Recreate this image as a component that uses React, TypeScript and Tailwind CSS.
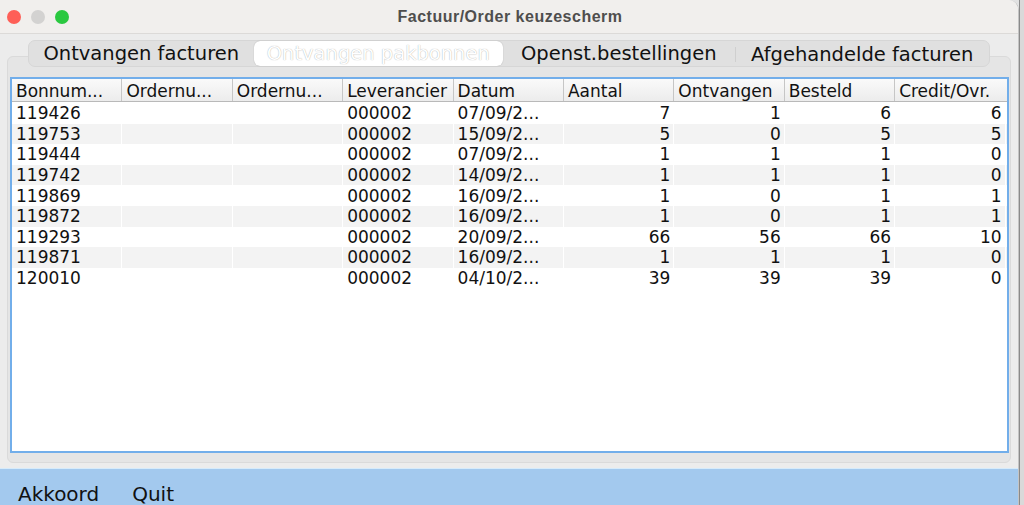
import React from 'react'

const columns = ['Bonnum...', 'Ordernu...', 'Ordernu...', 'Leverancier', 'Datum', 'Aantal', 'Ontvangen', 'Besteld', 'Credit/Ovr.']

const rows = [
  ['119426', '', '', '000002', '07/09/2...', '7', '1', '6', '6'],
  ['119753', '', '', '000002', '15/09/2...', '5', '0', '5', '5'],
  ['119444', '', '', '000002', '07/09/2...', '1', '1', '1', '0'],
  ['119742', '', '', '000002', '14/09/2...', '1', '1', '1', '0'],
  ['119869', '', '', '000002', '16/09/2...', '1', '0', '1', '1'],
  ['119872', '', '', '000002', '16/09/2...', '1', '0', '1', '1'],
  ['119293', '', '', '000002', '20/09/2...', '66', '56', '66', '10'],
  ['119871', '', '', '000002', '16/09/2...', '1', '1', '1', '0'],
  ['120010', '', '', '000002', '04/10/2...', '39', '39', '39', '0'],
]

const tabs = [
  { label: 'Ontvangen facturen', w: 'w-[225px]', selected: false },
  { label: 'Ontvangen pakbonnen', w: 'w-[250px]', selected: true },
  { label: 'Openst.bestellingen', w: 'w-[232px]', selected: false },
  { label: 'Afgehandelde facturen', w: 'w-[255px]', selected: false },
]

export default function App() {
  return (
    <div className="w-[1024px] h-[505px] flex overflow-hidden bg-[#e2e2e2] font-['DejaVu_Sans',sans-serif]">
      <div className="w-[1019px] h-full flex flex-col bg-[#ececec] border-r border-[#c4c4c4] rounded-tr-[10px] overflow-hidden">
        {/* Title bar */}
        <div className="h-[34px] shrink-0 flex items-center px-[7px] bg-[#f1efed] border-b border-[#dcdad8]">
          <div className="flex items-center gap-[10px] shrink-0">
            <span className="block shrink-0 w-[14px] h-[14px] rounded-full bg-[#fe5f57]" />
            <span className="block shrink-0 w-[14px] h-[14px] rounded-full bg-[#d3d2d1]" />
            <span className="block shrink-0 w-[14px] h-[14px] rounded-full bg-[#2ac840]" />
          </div>
          <div className="flex-1 text-center pr-[60px] font-['Liberation_Sans',sans-serif] font-bold text-[16px] tracking-[0.5px] text-[#4f4e4d]">
            Factuur/Order keuzescherm
          </div>
        </div>

        {/* Body */}
        <div className="flex-1 flex flex-col pt-[6px] px-[7px]">
          {/* Tabs */}
          <div className="relative z-10 flex ml-[21px] h-[27px] w-[962px] rounded-[7px] bg-[#e0e0e0] border border-[#d6d6d6]">
            {tabs.map((t, i) => (
              <div
                key={t.label}
                className={`${t.w} h-full flex items-center justify-center text-[19.5px] leading-none ${
                  t.selected
                    ? 'bg-white rounded-[6px] text-white [text-shadow:0_0_1px_#9a9a9a] shadow-[0_0_1px_rgba(0,0,0,0.3)]'
                    : 'text-[#111]'
                } ${i === 3 ? 'border-l border-[#cfcfcf] my-[6px] !h-[15px]' : ''}`}
              >
                {t.label}
              </div>
            ))}
          </div>

          {/* Tab pane */}
          <div className="-mt-[11px] h-[407px] w-[1004px] rounded-[6px] bg-[#e5e5e5] border border-[#dadada] pt-[20px] px-[2px]">
            <div className="h-[376px] w-[999px] bg-white border-2 border-[#72aeea] flex flex-col">
              {/* Header */}
              <div className="grid grid-cols-[repeat(9,110.4px)] h-[23px] border-b border-[#b9b9b9] bg-gradient-to-b from-[#fafafa] to-[#ececec]">
                {columns.map((c, i) => (
                  <div
                    key={i}
                    className={`px-[4px] pt-[3px] flex items-center text-[17px] leading-none text-[#111] whitespace-nowrap overflow-hidden ${
                      i < 8 ? 'border-r border-[#c6c6c6]' : ''
                    }`}
                  >
                    {c}
                  </div>
                ))}
              </div>
              <div className="h-[1px]" />
              {/* Rows */}
              {rows.map((r, ri) => (
                <div
                  key={ri}
                  className={`grid grid-cols-[repeat(9,110.4px)] h-[20.6px] ${ri % 2 === 1 ? 'bg-[#f3f3f3]' : 'bg-white'}`}
                >
                  {r.map((v, ci) => (
                    <div
                      key={ci}
                      className={`flex items-center pt-[1px] text-[17px] leading-none text-[#111] whitespace-nowrap overflow-hidden border-r border-white ${
                        ci >= 5 ? 'justify-end pr-[3px]' : 'pl-[4px]'
                      }`}
                    >
                      {v}
                    </div>
                  ))}
                </div>
              ))}
            </div>
          </div>
        </div>

        {/* Bottom bar */}
        <div className="h-[37px] shrink-0 mt-[5px] bg-[#a3c9ee] border-t border-[#d6ebfb] flex items-center gap-[33px] pl-[18px] pt-[13px] text-[20px] text-[#111] leading-none">
          <span>Akkoord</span>
          <span>Quit</span>
        </div>
      </div>
      <div className="flex-1 bg-[#d9d9d9] border-l border-[#8a8a8a]" />
    </div>
  )
}
